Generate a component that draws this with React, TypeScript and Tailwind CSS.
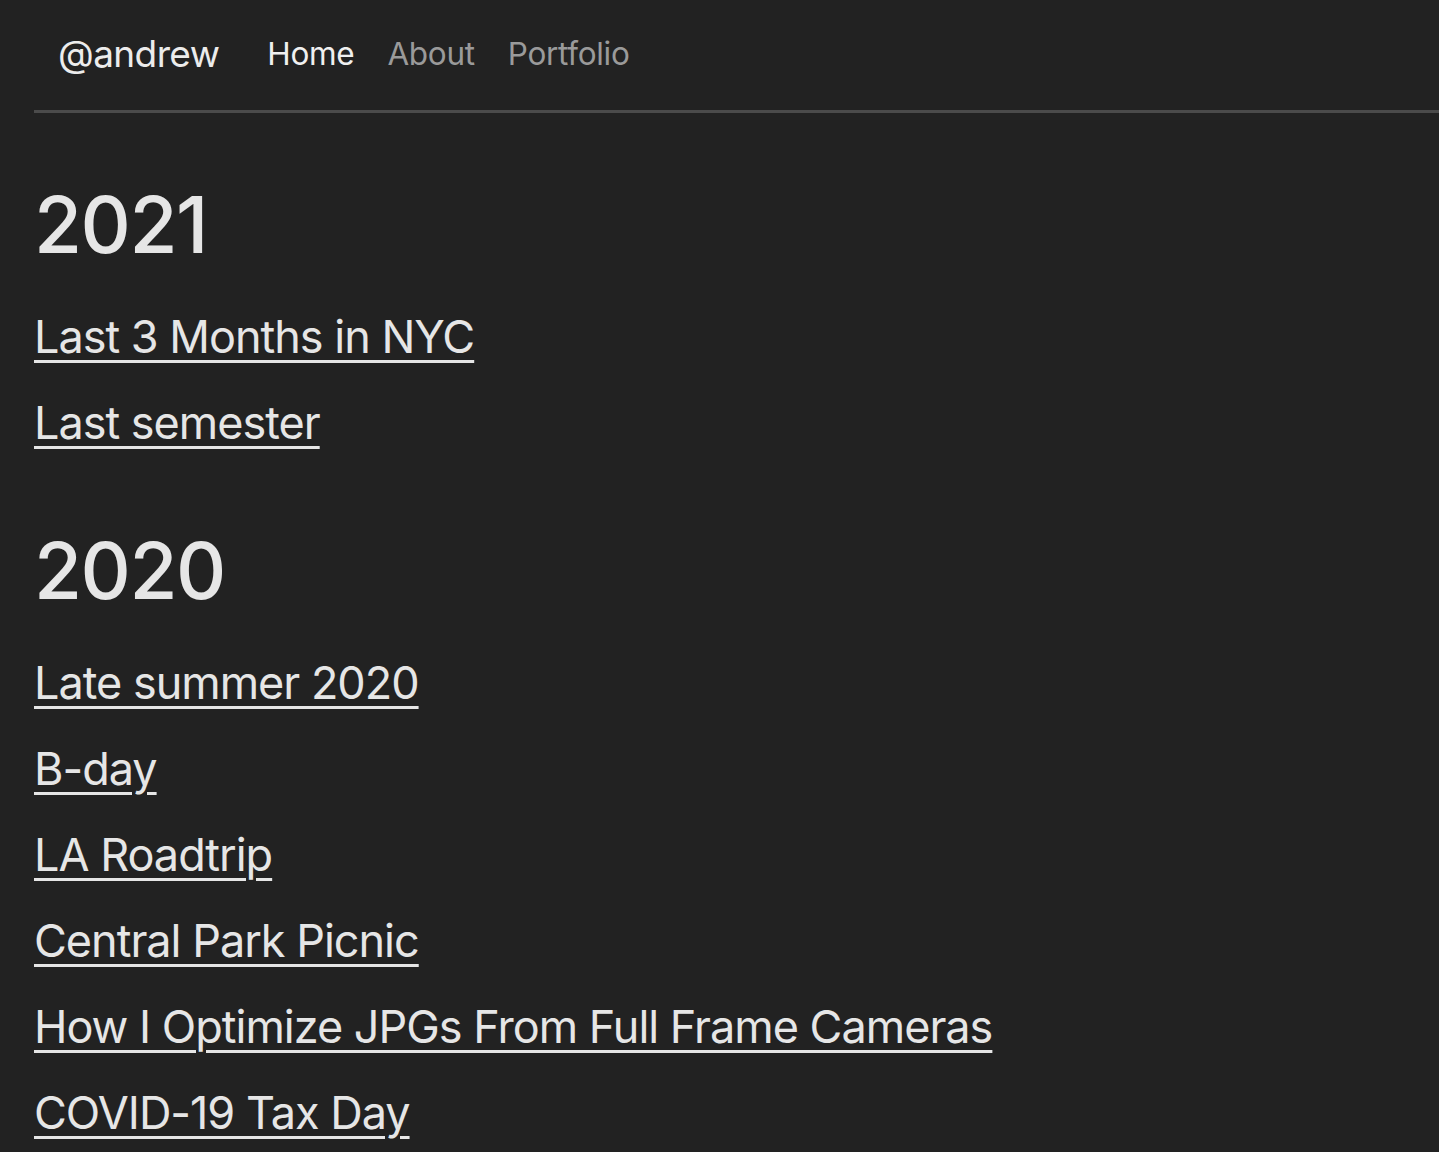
import React from 'react';

const groups = [
  { year: '2021', posts: ['Last 3 Months in NYC', 'Last semester'] },
  {
    year: '2020',
    posts: [
      'Late summer 2020',
      'B-day',
      'LA Roadtrip',
      'Central Park Picnic',
      'How I Optimize JPGs From Full Frame Cameras',
      'COVID-19 Tax Day',
    ],
  },
];

const App: React.FC = () => {
  return (
    <div
      className="min-h-screen bg-[#222222] pl-[34px] text-[#e6e6e6]"
      style={{ fontFamily: 'Inter, "Noto Sans", sans-serif' }}
    >
      {/* Header */}
      <header className="flex h-[113px] items-center border-b-[3px] border-[#4b4b4b] pl-[24px] pb-[2px]">
        <a className="text-[37px] tracking-[-0.6px] text-[#ececec]">@andrew</a>
        <nav className="ml-[48px] flex items-center gap-[33px] text-[31.5px] tracking-[-0.3px]">
          <a className="text-[#f0f0f0]">Home</a>
          <a className="text-[#9a9a9a]">About</a>
          <a className="text-[#9a9a9a]">Portfolio</a>
        </nav>
      </header>

      {/* Posts by year */}
      <main className="pt-[73px]">
        {groups.map((g) => (
          <section key={g.year} className="mb-[81px]">
            <h2 className="text-[78px] font-medium leading-none tracking-[-1.5px]">{g.year}</h2>
            <ul className="mt-[45px] flex flex-col gap-[30px]">
              {g.posts.map((p) => (
                <li key={p}>
                  <a className="text-[45px] leading-[56px] tracking-[-1px] underline decoration-[3px] underline-offset-[7px]">
                    {p}
                  </a>
                </li>
              ))}
            </ul>
          </section>
        ))}
      </main>
    </div>
  );
};

export default App;
